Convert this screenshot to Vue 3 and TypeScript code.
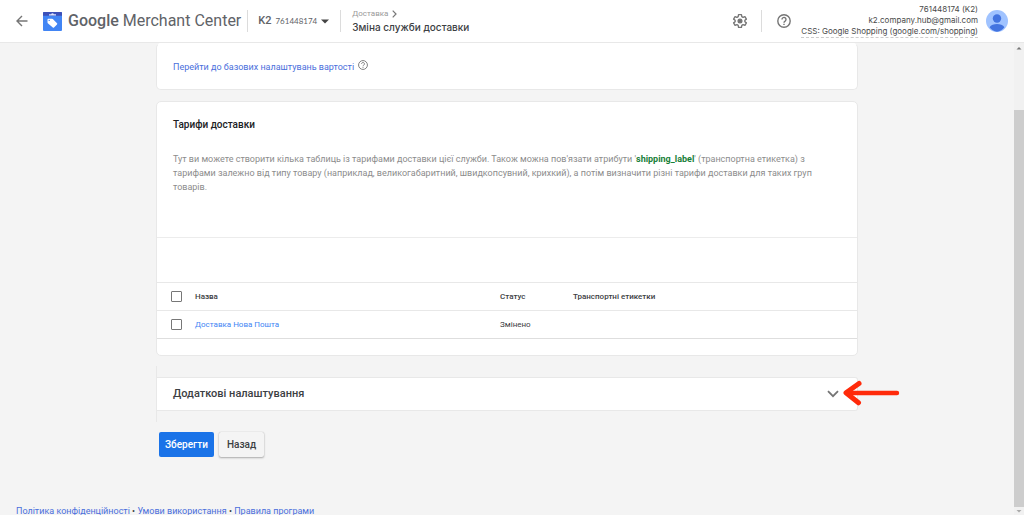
<script setup lang="ts">
import { computed, ref } from 'vue'

interface ShippingRate {
  id: number
  name: string
  status: string
  labels: string
}

const accountId = '761448174'
const rates = ref<ShippingRate[]>([
  { id: 1, name: 'Доставка Нова Пошта', status: 'Змінено', labels: '' },
])
const selected = ref<number[]>([])
const allSelected = computed({
  get: () => rates.value.length > 0 && selected.value.length === rates.value.length,
  set: (on: boolean) => {
    selected.value = on ? rates.value.map((rate) => rate.id) : []
  },
})
const expanded = ref(false)
const footerLinks = ['Політика конфіденційності', 'Умови використання', 'Правила програми']
</script>

<template>
  <div class="page">
    <header class="topbar">
      <button class="icon-btn back" type="button" aria-label="Назад до списку">
        <svg width="12" height="12" viewBox="0 0 12 12" fill="none" stroke="#757575" stroke-width="1.4">
          <path d="M11.5 6H1.2M6 1 1 6l5 5" />
        </svg>
      </button>
      <a class="brand" href="#">
        <svg width="19" height="19" viewBox="0 0 19 19">
          <rect width="19" height="19" rx="1" fill="#4285f4" />
          <path d="M0 3.800V1a1 1 0 0 1 1-1h17a1 1 0 0 1 1 1v2.800z" fill="#3c50b8" />
          <path d="M6 2.300h2.100a1.500 1.500 0 0 1 2.800 0H13v1.100H6z" fill="#dfe5fb" />
          <path d="M4.500 7.600q0-.8.8-.8h3.700q.5 0 .8.3l4.200 4.100q.6.6 0 1.200l-3 3q-.6.600-1.200 0L4.800 11.200Q4.500 10.900 4.500 10.500z" fill="#fff" />
          <circle cx="6.200" cy="8.400" r=".7" fill="#4285f4" />
        </svg>
        <span class="brand-name"><b>Google</b> Merchant Center</span>
      </a>
      <span class="divider"></span>
      <button class="account" type="button">
        <b>K2</b>
        <span>{{ accountId }}</span>
        <svg width="8" height="5" viewBox="0 0 8 5"><path d="M0 .5h8L4 4.500z" fill="#444" /></svg>
      </button>
      <span class="divider"></span>
      <div class="crumbs">
        <a class="crumb" href="#">
          Доставка
          <svg width="5" height="8" viewBox="0 0 5 8" fill="none" stroke="#777" stroke-width="1.200"><path d="m.7.7 3.300 3.300L.7 7.300" /></svg>
        </a>
        <h1>Зміна служби доставки</h1>
      </div>
      <div class="tools">
        <button class="icon-btn" type="button" aria-label="Налаштування">
          <svg width="16" height="16" viewBox="0 0 24 24" fill="none" stroke="#757575" stroke-width="2" stroke-linejoin="round">
            <path d="M9.800 2.500h4.400l.5 2.900 1.900 1.100 2.800-1.100 2.200 3.800-2.300 1.800v2l2.300 1.800-2.200 3.800-2.800-1.100-1.900 1.100-.5 2.900H9.800l-.5-2.900-1.900-1.100-2.800 1.100-2.200-3.800L4.700 13v-2L2.400 9.200l2.200-3.800 2.800 1.100 1.900-1.100z" />
            <circle cx="12" cy="12" r="2.800" fill="#757575" />
          </svg>
        </button>
        <span class="divider"></span>
        <button class="icon-btn" type="button" aria-label="Довідка">
          <svg width="14" height="14" viewBox="0 0 14 14" fill="none" stroke="#757575" stroke-width="1.400">
            <circle cx="7" cy="7" r="6.200" />
            <path d="M5 5.500a2 2 0 1 1 3.100 1.600C7.300 7.600 7 7.900 7 8.700M7 9.700v1.300" />
          </svg>
        </button>
        <div class="user">
          <span>{{ accountId }} (K2)</span>
          <span>k2.company.hub@gmail.com</span>
          <span class="css-name">CSS: Google Shopping (google.com/shopping)</span>
        </div>
        <button class="icon-btn" type="button" aria-label="Обліковий запис">
          <svg width="22" height="22" viewBox="0 0 22 22">
            <circle cx="11" cy="11" r="11" fill="#a0c3ff" />
            <circle cx="11" cy="8.500" r="4.200" fill="#4374e0" />
            <path d="M3.600 17.200C4.800 15 8 14 11 14s6.200 1 7.400 3.200A11 11 0 0 1 11 21.800a11 11 0 0 1-7.400-4.600z" fill="#4374e0" />
          </svg>
        </button>
      </div>
    </header>

    <div class="body">
      <div class="content">
        <main>
          <section class="card base">
            <a href="#">Перейти до базових налаштувань вартості</a>
            <svg width="10" height="10" viewBox="0 0 14 14" fill="none" stroke="#777" stroke-width="1.300">
              <circle cx="7" cy="7" r="6.200" />
              <path d="M5 5.500a2 2 0 1 1 3.100 1.600C7.300 7.600 7 7.900 7 8.700M7 9.700v1.300" />
            </svg>
          </section>

          <section class="card rates">
            <div class="intro">
              <h2>Тарифи доставки</h2>
              <p>
                Тут ви можете створити кілька таблиць із тарифами доставки цієї служби. Також можна пов'язати атрибути
                '<strong>shipping_label</strong>' (транспортна етикетка) з тарифами залежно від типу товару (наприклад,
                великогабаритний, швидкопсувний, крихкий), а потім визначити різні тарифи доставки для таких груп товарів.
              </p>
            </div>
            <div class="table-tools"></div>
            <table>
              <thead>
                <tr>
                  <th class="pick"><input v-model="allSelected" type="checkbox" aria-label="Вибрати все" /></th>
                  <th class="name">Назва</th>
                  <th class="status">Статус</th>
                  <th>Транспортні етикетки</th>
                </tr>
              </thead>
              <tbody>
                <tr v-for="rate in rates" :key="rate.id">
                  <td class="pick"><input v-model="selected" type="checkbox" :value="rate.id" :aria-label="rate.name" /></td>
                  <td><a href="#">{{ rate.name }}</a></td>
                  <td>{{ rate.status }}</td>
                  <td>{{ rate.labels }}</td>
                </tr>
              </tbody>
            </table>
          </section>

          <section class="extra">
            <button class="extra-toggle" type="button" :aria-expanded="expanded" @click="expanded = !expanded">
              <span>Додаткові налаштування</span>
              <svg width="12" height="8" viewBox="0 0 12 8" fill="none" stroke="#757575" stroke-width="1.800"><path d="m1 1.200 5 5 5-5" /></svg>
            </button>
            <svg class="pointer" width="58" height="26" viewBox="0 0 58 26" fill="none" stroke="#ff2a0a" stroke-linecap="round" stroke-linejoin="round">
              <path d="M5 13h50" stroke-width="4.400" />
              <path d="M17 3.500 4 12.800l12.500 10" stroke-width="5" />
            </svg>
          </section>

          <div class="actions">
            <button class="save" type="button">Зберегти</button>
            <button class="cancel" type="button">Назад</button>
          </div>
        </main>

        <footer>
          <template v-for="(link, i) in footerLinks" :key="link">
            <span v-if="i > 0"> • </span><a href="#">{{ link }}</a>
          </template>
        </footer>
      </div>

      <div class="scrollbar" aria-hidden="true">
        <svg width="10" height="10" viewBox="0 0 10 10"><path d="M2.500 6.500 5 4l2.500 2.500z" fill="#777" /></svg>
        <div class="track"><div class="thumb"></div></div>
        <svg width="10" height="8" viewBox="0 0 10 8"><path d="M2.500 3 5 5.500 7.500 3z" fill="#aaa" /></svg>
      </div>
    </div>
  </div>
</template>

<style>
body {
  margin: 0;
  background: #f4f4f4;
}
</style>

<style scoped>
.page {
  display: flex;
  flex-direction: column;
  height: 100vh;
  overflow: hidden;
  background: #f4f4f4;
  color: #3c4043;
  font: 9px/14px Roboto, "Liberation Sans", sans-serif;
}
* {
  box-sizing: border-box;
}
button {
  font: inherit;
  color: inherit;
  border: 0;
  background: none;
  padding: 0;
  cursor: pointer;
}
svg {
  display: block;
  flex: none;
}
a {
  color: #4a6fdc;
  text-decoration: none;
}
.topbar {
  display: flex;
  align-items: center;
  flex: none;
  height: 43px;
  padding: 0 16px;
  background: #fff;
  border-bottom: 1px solid #e8e8e8;
}
.back {
  margin-right: 15px;
}
.brand {
  display: flex;
  align-items: center;
  gap: 6px;
  color: #5f6368;
}
.brand-name {
  font: 400 16px/20px Roboto, sans-serif;
  white-space: nowrap;
}
.brand-name b {
  font-weight: 500;
}
.divider {
  width: 1px;
  height: 22px;
  background: #dcdcdc;
}
.brand + .divider {
  margin: 0 10px 0 6px;
}
.account {
  display: flex;
  align-items: center;
  margin-right: 11px;
  color: #5f6368;
  font-family: Lato, sans-serif;
  font-size: 8px;
}
.account b {
  font-family: Roboto, sans-serif;
  font-size: 11px;
  font-weight: 500;
  margin-right: 4px;
}
.account svg {
  margin-left: 4px;
}
.crumbs {
  margin-left: 11px;
}
.crumb {
  display: flex;
  align-items: center;
  gap: 4px;
  font-size: 8px;
  line-height: 12px;
  color: #999;
}
h1 {
  margin: 0;
  font: 500 10px/15px Inter, sans-serif;
  color: #3c4043;
}
.tools {
  display: flex;
  align-items: center;
  margin-left: auto;
}
.tools .divider {
  margin: 0 15px 0 13px;
}
.user {
  display: flex;
  flex-direction: column;
  align-items: flex-end;
  margin: 0 8px 0 10px;
  font-family: Inter, sans-serif;
  font-size: 8px;
  line-height: 11px;
  color: #4a4a4a;
}
.css-name {
  border-bottom: 1px dashed #ccc;
}
.body {
  display: flex;
  flex: 1;
  min-height: 0;
}
.content {
  flex: 1;
  overflow: hidden;
}
main {
  padding: 0 156px;
}
.card {
  background: #fff;
  border: 1px solid #e8e8e8;
  border-radius: 5px;
}
.base {
  display: flex;
  gap: 4px;
  height: 47px;
  padding: 16px 16px 0;
  border-top-color: #fff;
}
.rates {
  margin-top: 11px;
  padding-bottom: 16px;
}
.intro {
  height: 135px;
  padding: 16px;
}
h2 {
  margin: 0 0 20px;
  font: 500 10px/14px Roboto, sans-serif;
  color: #202124;
}
p {
  max-width: 640px;
  margin: 0;
  color: #8c8c8c;
}
strong {
  color: #188038;
  font-weight: 700;
}
.table-tools {
  height: 45px;
  border-top: 1px solid #ececec;
}
table {
  width: 100%;
  border-collapse: collapse;
  table-layout: fixed;
  font-size: 8px;
}
th,
td {
  height: 28px;
  padding: 0;
  text-align: left;
  font-weight: 400;
  border-top: 1px solid #e8e8e8;
}
th {
  font-weight: 500;
}
tbody tr:last-child td {
  border-bottom: 1px solid #dedede;
}
td a {
  color: #4285f4;
}
.pick {
  width: 38px;
  padding-left: 14px;
}
.name {
  width: 305px;
}
.status {
  width: 73px;
}
input {
  display: block;
  appearance: none;
  width: 11px;
  height: 11px;
  margin: 0;
  border: 1px solid #777;
  border-radius: 1px;
}
input:checked {
  background: #1a73e8;
}
.extra {
  position: relative;
  margin-top: 10px;
  padding: 11px 0;
  border-left: 1px solid #e8e8e8;
}
.extra-toggle {
  display: flex;
  align-items: center;
  justify-content: space-between;
  width: 100%;
  height: 34px;
  padding: 0 18px 0 16px;
  background: #fff;
  border: 1px solid #e8e8e8;
  border-left: 0;
  border-radius: 0 3px 3px 0;
  font-size: 11px;
  font-weight: 500;
}
.pointer {
  position: absolute;
  top: 14px;
  right: -42px;
}
.actions {
  display: flex;
  gap: 5px;
  margin: 10px 3px 0;
}
.actions button {
  height: 25px;
  border-radius: 2px;
  font-size: 10px;
  font-weight: 500;
}
.actions .save {
  width: 55px;
  background: #1a73e8;
  color: #fff;
}
.actions .cancel {
  width: 45px;
  box-shadow: 0 1px 2px #aaa, 0 0 1px #bbb;
}
footer {
  padding: 47px 16px 16px;
  white-space: nowrap;
}
.scrollbar {
  display: flex;
  flex-direction: column;
  flex: none;
  width: 10px;
  background: #f1f1f1;
}
.track {
  flex: 1;
  padding-top: 57px;
}
.thumb {
  height: 100%;
  background: #cdcdcd;
}
</style>
